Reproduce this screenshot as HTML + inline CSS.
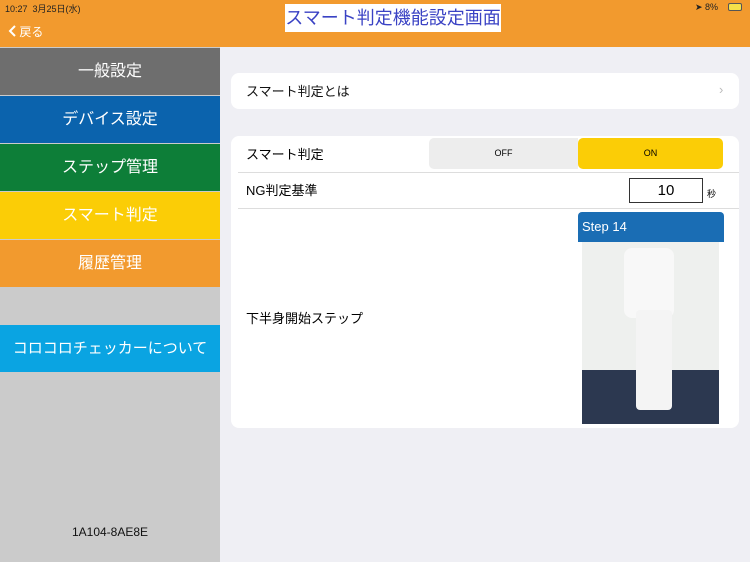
<!DOCTYPE html><html><head><meta charset="utf-8"><style>
*{margin:0;padding:0;box-sizing:border-box}
body{width:750px;height:562px;overflow:hidden;background:#efeff4;font-family:"Liberation Sans","Noto Sans CJK JP",sans-serif;position:relative}
.a{position:absolute}
.top{left:0;top:0;width:750px;height:47px;background:#f29a2e}
.side{left:0;top:47px;width:220px;height:515px;background:#cbcbcb}
.m{position:absolute;left:0;width:220px;height:47px;color:#fff;font-size:16px;text-align:center;line-height:47px}
.card{background:#fff;border-radius:8px}
.sep{height:1px;background:#ddd}
</style></head><body>
<div class="a top"></div>
<div class="a" style="left:5px;top:2px;font-size:9px;color:#222">10:27&nbsp; 3月25日(水)</div>
<div class="a" style="left:695px;top:2px;font-size:9px;color:#222">➤ 8%</div>
<div class="a" style="left:728px;top:3px;width:14px;height:8px;border:1px solid #555;border-radius:2px;background:#f5e04a"></div>
<div class="a" style="left:8px;top:23px;color:#fff;font-size:12px"><svg width="8" height="12" style="vertical-align:-1px"><path d="M7 1L2 6l5 5" stroke="#fff" stroke-width="2" fill="none"/></svg> 戻る</div>
<div class="a" style="left:285px;top:4px;width:216px;height:28px;background:#fff;color:#3a42c4;font-size:18px;text-align:center;line-height:28px">スマート判定機能設定画面</div>
<div class="a side"></div>
<div class="m" style="top:48px;background:#6e6e6e">一般設定</div>
<div class="m" style="top:96px;background:#0b63ad">デバイス設定</div>
<div class="m" style="top:144px;background:#0d7e38">ステップ管理</div>
<div class="m" style="top:192px;background:#fbcd06">スマート判定</div>
<div class="m" style="top:240px;background:#f29a2e">履歴管理</div>
<div class="m" style="top:325px;background:#0aa4e2;font-size:15px">コロコロチェッカーについて</div>
<div class="a" style="left:0;top:525px;width:220px;text-align:center;font-size:12px;color:#111">1A104-8AE8E</div>
<div class="a card" style="left:231px;top:73px;width:508px;height:36px"></div>
<div class="a" style="left:246px;top:81px;font-size:13px;color:#111">スマート判定とは</div>
<div class="a" style="left:719px;top:82px;color:#bbb;font-size:13px">›</div>
<div class="a card" style="left:231px;top:136px;width:508px;height:292px"></div>
<div class="a" style="left:246px;top:144px;font-size:13px">スマート判定</div>
<div class="a" style="left:429px;top:138px;width:149px;height:31px;background:#ededed;border-radius:5px 0 0 5px;font-size:9px;text-align:center;line-height:31px">OFF</div>
<div class="a" style="left:578px;top:138px;width:145px;height:31px;background:#fbcd06;border-radius:5px;font-size:9px;text-align:center;line-height:31px">ON</div>
<div class="a sep" style="left:238px;top:172px;width:501px"></div>
<div class="a" style="left:246px;top:180px;font-size:13px">NG判定基準</div>
<div class="a" style="left:629px;top:178px;width:74px;height:25px;border:1px solid #333;font-size:15px;text-align:center;line-height:23px">10</div>
<div class="a" style="left:707px;top:187px;font-size:9px">秒</div>
<div class="a sep" style="left:238px;top:208px;width:501px"></div>
<div class="a" style="left:246px;top:308px;font-size:13px">下半身開始ステップ</div>
<div class="a" style="left:578px;top:212px;width:146px;height:30px;background:#1a6db4;border-radius:4px 4px 0 0;color:#fff;font-size:13px;padding:7px 4px">Step 14</div>
<div class="a" style="left:582px;top:242px;width:137px;height:128px;background:#eef0ee"></div>
<div class="a" style="left:582px;top:370px;width:137px;height:54px;background:#2c3850"></div>
<div class="a" style="left:624px;top:248px;width:50px;height:70px;background:#f8f8f8;border-radius:8px"></div>
<div class="a" style="left:636px;top:310px;width:36px;height:100px;background:#f4f4f4;border-radius:4px"></div>
</body></html>
